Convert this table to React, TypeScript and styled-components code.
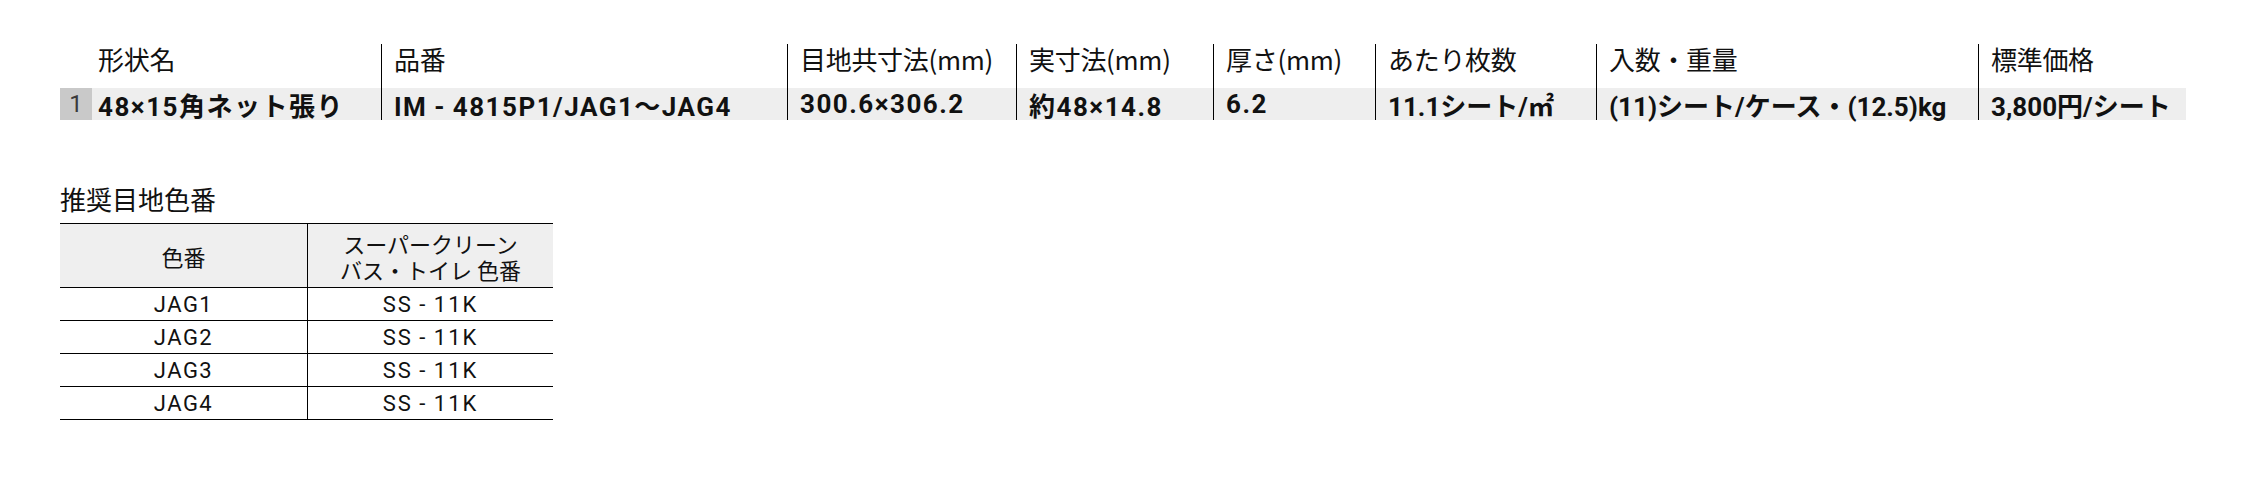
import { Fragment } from "react";
import styled, { createGlobalStyle } from "styled-components";

const GlobalStyle = createGlobalStyle`
	body {
		margin: 0;
		background: #ffffff;
		color: #111111;
		font-family: Roboto, "Noto Sans CJK JP", sans-serif;
	}
`;

const specHeads = [
	"形状名",
	"品番",
	"目地共寸法(mm)",
	"実寸法(mm)",
	"厚さ(mm)",
	"あたり枚数",
	"入数・重量",
	"標準価格",
];

// tight: CJK-heavy values that the DIN-ish spacing makes too wide
const specValues = [
	{ text: "48×15角ネット張り", tight: false },
	{ text: "IM\u2009-\u20094815P1/JAG1～JAG4", tight: false },
	{ text: "300.6×306.2", tight: false },
	{ text: "約48×14.8", tight: false },
	{ text: "6.2", tight: false },
	{ text: "11.1シート/㎡", tight: true },
	{ text: "(11)シート/ケース・(12.5)kg", tight: true },
	{ text: "3,800円/シート", tight: true },
];

const jointColors = [
	{ code: "JAG1", clean: "SS\u2009-\u200911K" },
	{ code: "JAG2", clean: "SS\u2009-\u200911K" },
	{ code: "JAG3", clean: "SS\u2009-\u200911K" },
	{ code: "JAG4", clean: "SS\u2009-\u200911K" },
];

export default function App() {
	return (
		<Page>
			<GlobalStyle />
			<SpecTable>
				<BlankHead />
				{specHeads.map((head, i) => (
					<HeadCell key={head} $divider={i > 0}>
						{head}
					</HeadCell>
				))}
				<RowNumber>1</RowNumber>
				{specValues.map((value, i) => (
					<ValueCell key={value.text} $divider={i > 0} $tight={value.tight}>
						{value.text}
					</ValueCell>
				))}
			</SpecTable>

			<SectionTitle>推奨目地色番</SectionTitle>
			<ColorTable>
				<ColorHead>色番</ColorHead>
				<ColorHead $divider>
					<HeadLine>スーパークリーン</HeadLine>
					<HeadLine>バス・トイレ 色番</HeadLine>
				</ColorHead>
				{jointColors.map((row) => (
					<Fragment key={row.code}>
						<ColorCell>{row.code}</ColorCell>
						<ColorCell $divider $wide>
							{row.clean}
						</ColorCell>
					</Fragment>
				))}
			</ColorTable>
		</Page>
	);
}

const Page = styled.main`
	display: flex;
	flex-direction: column;
	align-items: flex-start;
	padding: 44px 0 0 60px;
`;

const SpecTable = styled.div`
	display: grid;
	grid-template-columns: 32px 289px 406px 229px 197px 162px 221px 382px 208px;
	grid-template-rows: 44px 32px;
`;

const BlankHead = styled.div``;

const HeadCell = styled.div<{ $divider?: boolean }>`
	display: flex;
	align-items: flex-start;
	padding-left: ${(p) => (p.$divider ? "12px" : "6px")};
	border-left: ${(p) => (p.$divider ? "1px solid #000" : "none")};
	font-family: "Noto Sans CJK JP", sans-serif;
	font-size: 26px;
	line-height: 30px;
	letter-spacing: -0.3px;
	white-space: nowrap;
`;

const RowNumber = styled.div`
	display: flex;
	align-items: center;
	justify-content: center;
	background: #c9c9c9;
	color: #3a3a3a;
	font-size: 24px;
	font-weight: 400;
`;

const ValueCell = styled.div<{ $divider?: boolean; $tight?: boolean }>`
	display: flex;
	align-items: center;
	padding-left: ${(p) => (p.$divider ? "12px" : "6px")};
	border-left: ${(p) => (p.$divider ? "1px solid #000" : "none")};
	background: #eeeeee;
	font-size: 26px;
	font-weight: 700;
	letter-spacing: ${(p) => (p.$tight ? "0" : "1.5px")};
	white-space: nowrap;
`;

const SectionTitle = styled.h2`
	margin: 63px 0 9px;
	font-family: "Noto Sans CJK JP", sans-serif;
	font-size: 26px;
	font-weight: 400;
	line-height: 31px;
`;

const ColorTable = styled.div`
	display: grid;
	grid-template-columns: 247px 246px;
	grid-template-rows: 64px;
	grid-auto-rows: 33px;
	border-top: 1px solid #000;
`;

const ColorHead = styled.div<{ $divider?: boolean }>`
	display: flex;
	flex-direction: column;
	align-items: center;
	justify-content: center;
	background: #efefef;
	border-bottom: 1px solid #000;
	border-left: ${(p) => (p.$divider ? "1px solid #000" : "none")};
	font-family: "Noto Sans CJK JP", sans-serif;
	font-size: 22px;
	line-height: 26px;
	text-align: center;
`;

const HeadLine = styled.span`
	display: block;
	white-space: nowrap;
`;

const ColorCell = styled.div<{ $divider?: boolean; $wide?: boolean }>`
	display: flex;
	align-items: center;
	justify-content: center;
	border-bottom: 1px solid #000;
	border-left: ${(p) => (p.$divider ? "1px solid #000" : "none")};
	font-size: 22px;
	letter-spacing: ${(p) => (p.$wide ? "2px" : "1.5px")};
`;
